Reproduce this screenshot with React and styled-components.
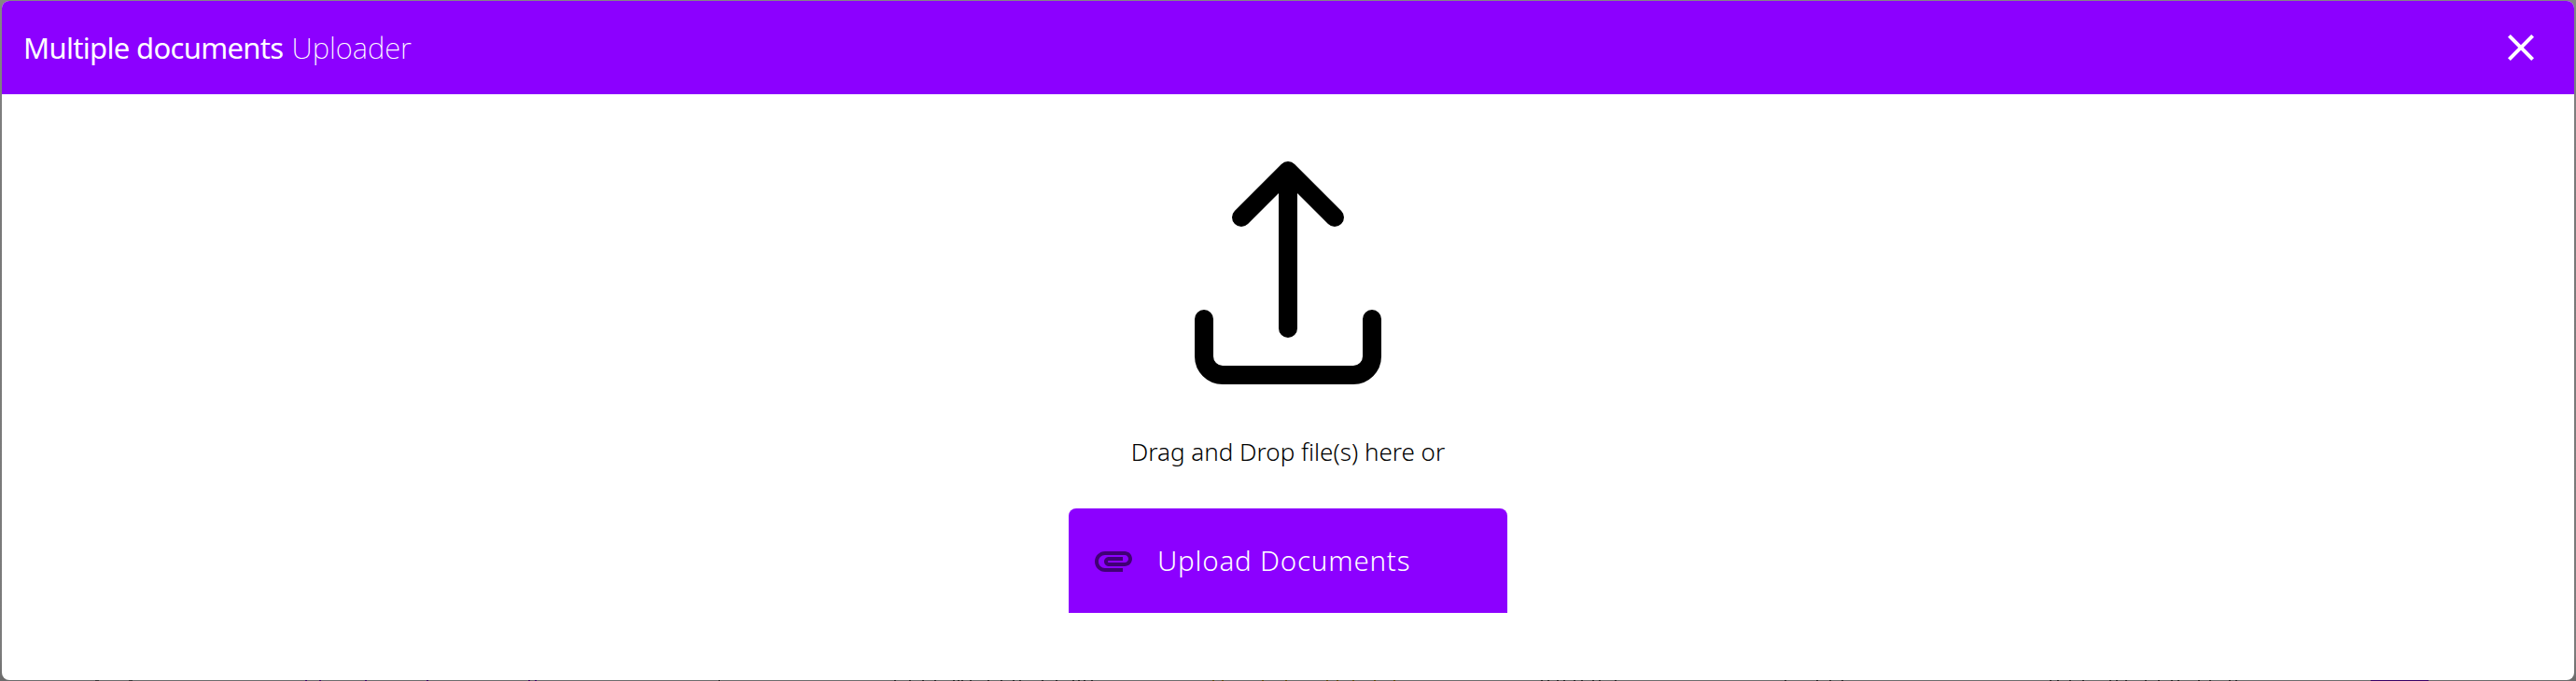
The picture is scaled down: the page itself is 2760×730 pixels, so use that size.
import React from 'react';
import styled, { createGlobalStyle } from 'styled-components';

const GlobalStyle = createGlobalStyle`
  *, *::before, *::after { box-sizing: border-box; }
  body {
    margin: 0;
    background: #808080;
    font-family: 'Noto Sans', sans-serif;
  }
`;

const Backdrop = styled.div`
  height: 730px;
  padding: 1px 2px 0;
  overflow: hidden;
  display: flex;
  flex-direction: column;
  background: linear-gradient(#858585, #787878 30%, #7b7b7b 96%, #6b6b6b);
`;

const Dialog = styled.section`
  flex: 0 0 728px;
  display: flex;
  flex-direction: column;
  overflow: hidden;
  border-radius: 8px;
  background: #fff;
`;

const Header = styled.header`
  flex: 0 0 100px;
  display: flex;
  align-items: center;
  justify-content: space-between;
  padding: 0 33px 0 23px;
  background: #8c00ff;
  color: #fff;
`;

const Title = styled.h1`
  margin: 0;
  display: flex;
  gap: 9px;
  font-size: 31px;
  line-height: 42px;
`;

const TitlePart = styled.span`
  font-weight: ${(p) => (p.$strong ? 400 : 250)};
  letter-spacing: ${(p) => (p.$strong ? '-0.67px' : '0')};
`;

const CloseButton = styled.button`
  display: flex;
  padding: 0;
  border: 0;
  background: none;
  color: inherit;
`;

const Icon = styled.svg`
  display: block;
  flex: none;
  width: ${(p) => p.$size}px;
  height: ${(p) => p.$size}px;
`;

const DropZone = styled.main`
  flex: 1;
  display: flex;
  flex-direction: column;
  align-items: center;
  padding-top: 72px;
  color: #000;
`;

const UploadArt = styled.svg`
  display: block;
  width: 200px;
  height: 240px;
  fill: none;
  stroke: #000;
  stroke-width: 20;
  stroke-linecap: round;
  stroke-linejoin: round;
`;

const Hint = styled.p`
  margin: 53px 0 42px;
  font-size: 26px;
  line-height: 37px;
  font-weight: 300;
`;

const UploadButton = styled.button`
  width: 470px;
  height: 112px;
  padding: 0 24px;
  border: 0;
  border-radius: 8px 8px 0 0;
  display: flex;
  align-items: center;
  gap: 23px;
  background: #8c00ff;
  color: rgba(0, 0, 0, 0.54);
`;

const UploadLabel = styled.span`
  padding-bottom: 2px;
  font-family: 'Noto Sans', sans-serif;
  font-size: 29.5px;
  font-weight: 290;
  letter-spacing: 0.8px;
  color: #fff;
`;

const PageEdge = styled.div`
  flex: 0 0 1px;
  display: flex;
  margin: 0 -2px;
  background: #6b6b6b;
`;

const Fragment = styled.span`
  flex: 0 0 ${(p) => p.$width}px;
  margin-left: ${(p) => p.$gap}px;
  background: ${(p) => p.$color};
`;

// [start, width, colour] of the page content showing under the dialog
const edge = [
  [102, 4, '#333'], [138, 4, '#333'],
  [327, 2, '#380066'], [342, 2, '#380066'], [391, 2, '#380066'],
  [457, 2, '#380066'], [566, 2, '#380066'], [573, 2, '#380066'],
  [770, 1, '#000'],
  ...[958, 974, 988, 1001, 1021, 1026, 1030, 1039, 1058, 1072, 1085, 1092,
    1116, 1131, 1149, 1155, 1161, 1169].map((x) => [x, 2, '#222']),
  ...[1299, 1309, 1352, 1377, 1421, 1432, 1449, 1472, 1493].map((x) => [x, 2, '#5a4400']),
  ...[1651, 1658, 1668, 1675, 1686, 1694, 1706, 1713, 1730,
    1912, 1946, 1960, 1973,
    2196, 2204, 2217, 2231, 2260, 2267, 2277, 2298, 2312, 2326, 2333,
    2355, 2367, 2388, 2395].map((x) => [x, 2, '#222']),
  [2540, 62, '#380066'],
];

export default function App() {
  return (
    <>
      <GlobalStyle />
      <Backdrop>
        <Dialog role="dialog">
          <Header>
            <Title>
              <TitlePart $strong>Multiple documents</TitlePart>
              <TitlePart>Uploader</TitlePart>
            </Title>
            <CloseButton aria-label="Close">
              <Icon $size={48} viewBox="0 0 24 24" fill="currentColor">
                <path d="M19 6.41 17.59 5 12 10.59 6.41 5 5 6.41 10.59 12 5 17.59 6.41 19 12 13.41 17.59 19 19 17.59 13.41 12z" />
              </Icon>
            </CloseButton>
          </Header>
          <DropZone>
            <UploadArt viewBox="0 0 200 240">
              <path d="M50 60 100 10 150 60M100 10V179M10 169V209a20 20 0 0 0 20 20H170a20 20 0 0 0 20-20V169" />
            </UploadArt>
            <Hint>Drag and Drop file(s) here or</Hint>
            <UploadButton>
              <Icon $size={48} viewBox="0 0 24 24" fill="currentColor">
                <path d="M2 12.5C2 9.46 4.46 7 7.5 7H18c2.21 0 4 1.79 4 4s-1.79 4-4 4H9.5C8.12 15 7 13.88 7 12.5S8.12 10 9.5 10H17v2H9.41c-.55 0-.55 1 0 1H18c1.1 0 2-.9 2-2s-.9-2-2-2H7.5C5.57 9 4 10.57 4 12.5S5.57 16 7.5 16H17v2H7.5C4.46 18 2 15.54 2 12.5z" />
              </Icon>
              <UploadLabel>Upload Documents</UploadLabel>
            </UploadButton>
          </DropZone>
        </Dialog>
        <PageEdge>
          {edge.map(([x, width, color], i) => {
            const end = i ? edge[i - 1][0] + edge[i - 1][1] : 0;
            return <Fragment key={x} $gap={x - end} $width={width} $color={color} />;
          })}
        </PageEdge>
      </Backdrop>
    </>
  );
}
